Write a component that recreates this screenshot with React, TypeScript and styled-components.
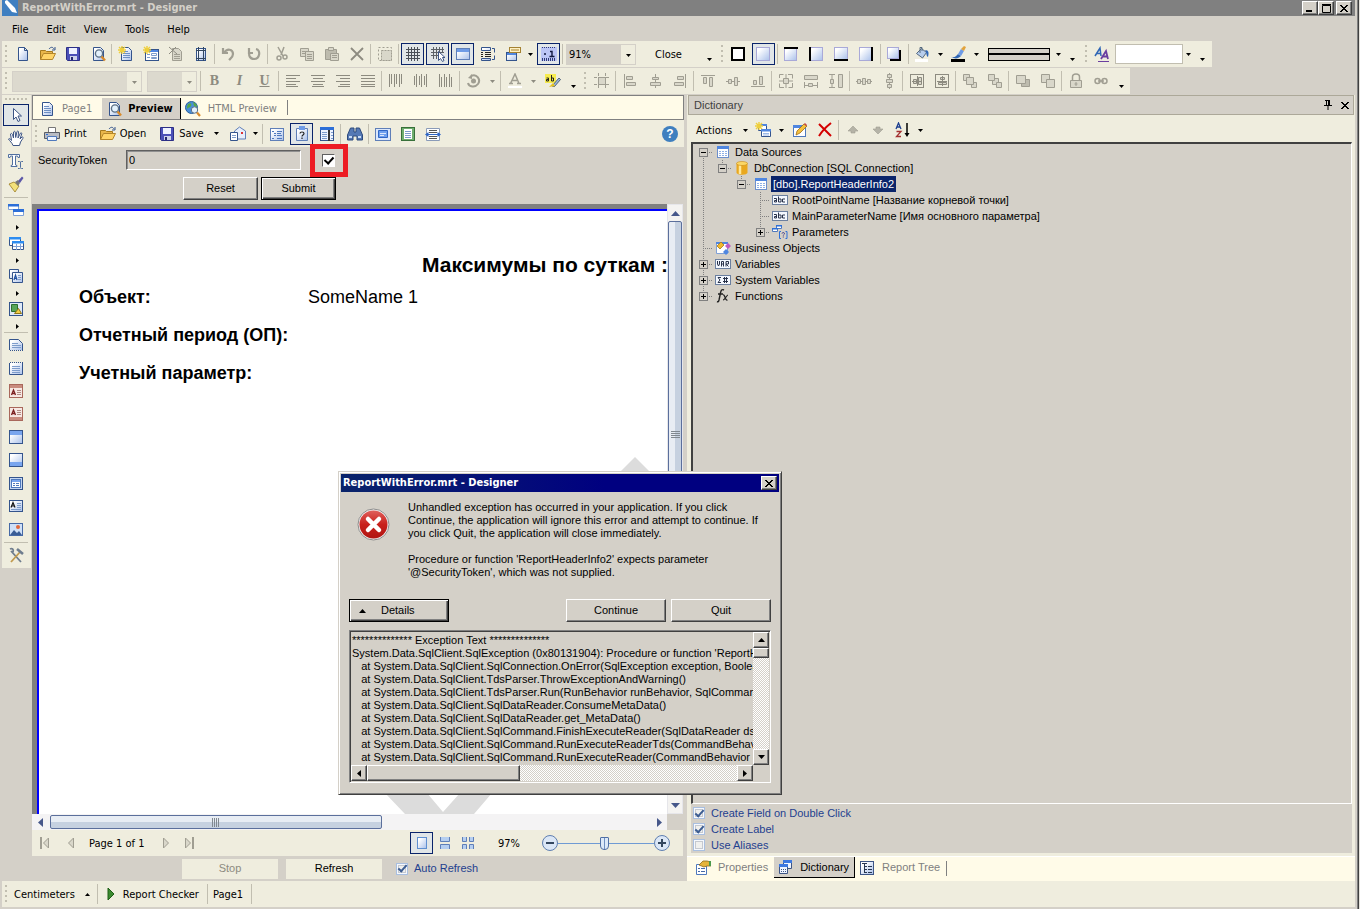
import React from "react";
import styled, { createGlobalStyle, css } from "styled-components";

const face = "#d4d0c8";
const bar = "#efedde";
const cream = "#fffbe8";
const navy = "#0a246a";
const ui = `"DejaVu Sans Condensed", "DejaVu Sans", sans-serif`;
const sans = `"Liberation Sans", Arial, sans-serif`;

const Global = createGlobalStyle`
  * { box-sizing: border-box; }
  html, body, #root { height: 100%; }
  body { margin: 0; background: ${face}; color: #000; font: 11px/13px ${sans}; overflow: hidden; }
  button, input, textarea, select { font: inherit; color: inherit; margin: 0; }
  button { border: 0; padding: 0; background: none; }
  svg { display: block; flex: none; }
`;

/* ---------- icons ---------- */

const B = "#34548c";
const G = "#a09e92";
const L = "#d9d7ca";

const page = <path d="M3.5 1.5h7l3 3v10h-10z" fill="url(#paper)" stroke={B} />;
const lines = <path d="M5 5.5h5M5 7.5h7M5 9.5h7M5 11.5h7" stroke="#6d8fc4" />;
const glass = (
  <>
    <circle cx="9" cy="7.5" r="3.6" fill="#e4f1fc" stroke="#5d7187" strokeWidth="1.4" />
    <path d="M11.5 10.5l3.5 4" stroke="#d98a2b" strokeWidth="2.4" />
  </>
);
const spark = <path d="M4 0v8M0 4h8M1 1l6 6M7 1L1 7" stroke="#efcf3a" strokeWidth="1.4" />;
const table = (
  <>
    <rect x="2.5" y="2.5" width="11" height="11" fill="#fff" stroke="#6d8fcb" />
    <path d="M2 2h12v3H2z" fill="#4f86e0" />
    <path d="M4 7.5h2M7 7.5h2M10 7.5h2M4 9.500h2M7 9.500h2M10 9.500h2M4 11.500h2M7 11.500h2M10 11.500h2" stroke="#8fb0e6" />
  </>
);
const redBand = (y: number, dy: number) => (
  <>
    <rect x="1.500" y="1.500" width="13" height="13" fill="#f7e9e4" stroke="#a9685c" />
    <rect x="2" y={y} width="12" height="3" fill="#c98c7f" />
    <path d={`M3.500 ${11 + dy}l2-5 2 5M4 ${9.5 + dy}h3`} fill="none" stroke="#7c1f1f" strokeWidth="1.300" />
    <path d={`M9 ${6.5 + dy}h4M9 ${8.5 + dy}h4M9 ${10.5 + dy}h4`} stroke="#b08a84" />
  </>
);
const box = (x: number, y: number, w: number, h: number) => (
  <rect x={x} y={y} width={w} height={h} fill="url(#paper)" stroke="#a9a9d8" />
);

const drawings: Record<string, React.ReactNode> = {
  logo: (
    <>
      <rect width="16" height="16" fill="#3f7fc1" />
      <path d="M3 1l2-1 8 8 2 5-5-1-7-9z" fill="#fff" />
    </>
  ),
  newDoc: <path d="M3.500 1.500h6l3 3v10h-9zM9.500 1.500v3h3" fill="url(#paper)" stroke={B} />,
  open: (
    <>
      <path d="M.500 13.500v-9h5l1 1h6v3" fill="#e8b64a" stroke="#a67a1e" />
      <path d="M.500 13.500l3-6h12l-3 6z" fill="#ffd468" stroke="#b3852a" />
      <path d="M9 3c2-2.500 4-2 5 0M15 1v3h-3" fill="none" stroke={B} />
    </>
  ),
  save: (
    <>
      <path d="M1.500 1.500h13v13h-12l-1-1z" fill="#4b50b8" stroke="#2c2f86" />
      <path d="M4 2h8v6H4z" fill="#eef2ff" />
      <path d="M5 10h7v4H5z" fill="#cdd2ea" />
      <path d="M6 11h2v3H6z" fill="#23266e" />
    </>
  ),
  preview: <>{page}{glass}</>,
  newPage: <>{page}{lines}{spark}</>,
  newForm: (
    <>
      <rect x="2.500" y="3.500" width="13" height="11" fill="#fff" stroke={B} />
      <path d="M3 4h12v2H3z" fill="#4f86e0" />
      <path d="M4 8.500h3M4 11.500h3M8.500 7.500h5v2h-5zM8.500 11.500h5v1h-5z" fill="none" stroke="#7d9ccb" />
      {spark}
    </>
  ),
  delPage: (
    <>
      <path d="M4.500 2.500h6l3 3v9h-9z" fill={L} stroke={G} />
      <path d="M6 8.500h6M6 10.500h6M6 12.500h6" stroke={G} />
      <path d="M1 1l8 7M8 1L1 8" stroke="#8d8b80" />
    </>
  ),
  pageSetup: (
    <>
      <rect x="3.500" y="2.500" width="9" height="12" fill="url(#paper)" stroke={B} />
      <path d="M5.500 1v14M10.500 1v14M3 4.500h10M3 12.500h10" stroke="#33475f" />
    </>
  ),
  undo: <path d="M2 2v5h5M3 7c3-5 9-4 9 1 0 3-2 4-4 6" fill="none" stroke={G} strokeWidth="2.200" />,
  redo: <path d="M3 2v5h4M10 3c5 1 4 10-2 10-4 0-6-4-4-7" fill="none" stroke={G} strokeWidth="2.200" />,
  cut: (
    <>
      <path d="M4 1l5 9M10 1L7 9" stroke={G} strokeWidth="1.500" />
      <circle cx="5" cy="12" r="2" fill="none" stroke={G} strokeWidth="1.500" />
      <circle cx="11" cy="11" r="2" fill="none" stroke={G} strokeWidth="1.500" />
    </>
  ),
  copy: <><path d="M1.500 2.500h8v8h-8z" fill={L} stroke={G} /><path d="M3 5.500h5M3 7.500h5" stroke={G} /><path d="M6.500 5.500h8v9h-8zM8 8.500h5M8 10.500h5M8 12.500h5" fill={L} stroke={G} /></>,
  paste: <><path d="M1.500 3.500h11v10h-11z" fill="#bdbbae" stroke={G} /><path d="M4.500 1.500h5v3h-5z" fill={L} stroke={G} /><path d="M6.500 7.500h8v7h-8zM8 9.500h5M8 11.500h5" fill={L} stroke={G} /></>,
  cross: <path d="M2 2l12 12M14 2L2 14" stroke="#8d8b80" strokeWidth="1.800" />,
  select: (
    <>
      <rect x="1.500" y="1.500" width="13" height="13" fill="none" stroke={G} strokeDasharray="2 2" />
      <rect x="4.500" y="4.500" width="10" height="10" fill={L} stroke={G} strokeDasharray="2 1" />
    </>
  ),
  grid: <path d="M3.500 1v14M6.500 1v14M9.500 1v14M12.500 1v14M1 3.500h14M1 6.500h14M1 9.500h14M1 12.500h14" stroke="#4a4f57" />,
  snap: (
    <>
      <path d="M3.500 1v12M6.500 1v12M9.500 1v12M12.500 1v6M1 3.500h13M1 6.500h13M1 9.500h8" stroke="#5c6167" />
      <path d="M8.500 5.500v9l2-2 2 3 1.500-1-1.500-3h2.500z" fill="#fff" stroke="#3d5585" />
    </>
  ),
  form: (
    <>
      <rect x="1.500" y="2.500" width="13" height="11" fill="url(#paper)" stroke="#5f7fb8" />
      <path d="M2 3h12v3H2z" fill="#6f9be6" />
    </>
  ),
  order: (
    <>
      <path d="M1.500 1.500h9v3h-9zM1.500 12.500h9v2h-9z" fill="url(#paper)" stroke={B} />
      <path d="M1 6.500h2M5 6.500h6M1 8.500h2M5 8.500h6M1 10.500h2M5 10.500h6" stroke="#222" />
      <path d="M12 2.500h2.500v4M12 13.500h2.500v-4" fill="none" stroke={B} />
    </>
  ),
  layers: (
    <>
      <rect x="1.500" y="6.500" width="10" height="8" fill="url(#paper)" stroke={B} />
      <path d="M2 7h9v2H2z" fill="#4f86e0" />
      <rect x="4.500" y="1.500" width="11" height="5" fill="#fff1c2" stroke="#a58232" />
      <path d="M6 4h8" stroke="#a58232" />
    </>
  ),
  ruler: (
    <>
      <path d="M0 1h16v14H0z" fill="#bcc6f6" />
      <path d="M1 13.500h14" stroke="#2f3a78" strokeDasharray="1 1" strokeWidth="3" />
      <path d="M1 1.500h14" stroke="#2f3a78" strokeDasharray="1 1" />
      <path d="M3 8h2M9 5.500h2V10M8.500 10.500h5" fill="none" stroke="#10183f" strokeWidth="1.400" />
    </>
  ),
  bAll: <rect x="2" y="2" width="12" height="12" fill="#fff" stroke="#000" strokeWidth="2" />,
  bNone: box(1.5, 1.5, 13, 13),
  bTop: <>{box(1.5, 2.5, 12, 12)}<path d="M1 2h14" stroke="#000" strokeWidth="2" /></>,
  bLeft: <>{box(2.5, 1.5, 12, 13)}<path d="M2 1v14" stroke="#000" strokeWidth="2" /></>,
  bBottom: <>{box(1.5, 1.5, 13, 12)}<path d="M1 14h14" stroke="#000" strokeWidth="2" /></>,
  bRight: <>{box(1.5, 1.5, 12, 13)}<path d="M14 1v14" stroke="#000" strokeWidth="2" /></>,
  bShadow: <><path d="M4 4h11v11H4z" fill="#000" />{box(1.5, 1.5, 11, 11)}</>,
  bucket: (
    <>
      <path d="M2.500 7.500l5-5 5 4-4 5.500z" fill="#b7cdec" stroke="#55697f" />
      <path d="M6 7V1.500h2V5" fill="none" stroke="#55697f" />
      <path d="M11 4c4 0 4 3 3 7-2-1-1-4-3-7z" fill="#2f66b5" />
      <path d="M1 13h13v3H1z" fill="#fff" />
    </>
  ),
  brush: (
    <>
      <path d="M1 11c4 1 5-1 7-3l3 2c-3 3-6 3-10 1z" fill="#2f66b5" />
      <path d="M8 8l3-5 3 2-3 5z" fill="#6f9be6" />
      <path d="M11 3l3-3 2 1-2 4z" fill="#e2a33c" />
      <path d="M1 13h14v3H1z" fill="#000" />
    </>
  ),
  aa: (
    <>
      <path d="M1 10l5-8 1 8M3 7.500h4" fill="none" stroke="#2f66b5" strokeWidth="1.500" />
      <path d="M7 13l5-8 2 8M9 10.500h4" fill="none" stroke="#6b3fa0" strokeWidth="1.800" />
      <path d="M4 15.500h11" stroke="#6b3fa0" />
    </>
  ),
  alignL: <path d="M1 2.500h14M1 5.500h10M1 8.500h14M1 11.500h10M1 13.500h12" stroke="#8d8b80" />,
  alignC: <path d="M1 2.500h14M3 5.500h10M1 8.500h14M3 11.500h10M2 13.500h12" stroke="#8d8b80" />,
  alignR: <path d="M1 2.500h14M5 5.500h10M1 8.500h14M5 11.500h10M3 13.500h12" stroke="#8d8b80" />,
  alignJ: <path d="M1 2.500h14M1 5.500h14M1 8.500h14M1 11.500h14M1 13.500h14" stroke="#8d8b80" />,
  vTop: <path d="M1.500 1v13M3.500 1v10M6.500 1v13M8.500 1v10M11.500 1v13M13.500 1v10" stroke="#8d8b80" />,
  vMid: <path d="M1.500 3v9M3.500 1v13M6.500 3v9M8.500 1v13M11.500 3v9M13.500 1v13" stroke="#8d8b80" />,
  vBot: <path d="M1.500 1v13M3.500 4v10M6.500 1v13M8.500 4v10M11.500 1v13M13.500 4v10" stroke="#8d8b80" />,
  rotate: (
    <>
      <path d="M5 3c6-3 10 4 7 8-3 4-9 3-10-1" fill="none" stroke={G} strokeWidth="2" />
      <circle cx="7.500" cy="8" r="2.500" fill={G} />
      <path d="M2 5l4-4v5z" fill={G} />
    </>
  ),
  fontColor: (
    <>
      <path d="M3.500 10.500L8 1l4 9.500M5 7.500h5M2 10.500h4M10 10.500h4" fill="none" stroke={G} strokeWidth="1.500" />
      <path d="M1 13h14v2H1z" fill="#fff" />
    </>
  ),
  highlight: (
    <>
      <path d="M0 1h11v9H0z" fill="#f7ec4f" />
      <path d="M1.500 5h2v3h-2v-1.500h2M6.500 2v6h2V5h-2" fill="none" stroke="#222" />
      <path d="M7 13l7-8 1.500 1.500-6 7z" fill="#9db8dd" stroke="#33475f" strokeWidth=".8" />
      <path d="M4 14l4-4 2 3z" fill="#e3c21f" />
    </>
  ),
  toGrid: (
    <>
      <path d="M4.500 0v16M11.500 0v16M0 4.500h16M0 11.500h16" stroke={G} strokeDasharray="3 1" />
      <rect x="4.500" y="4.500" width="7" height="7" fill={L} stroke={G} />
    </>
  ),
  objL: <path d="M2.500 1v14M4.500 3.500h6v3h-6zM4.500 9.500h9v3h-9z" fill={L} stroke={G} />,
  objC: <><path d="M8.500 1v14" stroke={G} /><path d="M5.500 4.500h6v2h-6zM3.500 9.500h10v3h-10z" fill={L} stroke={G} /></>,
  objR: <path d="M13.500 1v14M5.500 3.500h6v3h-6zM2.500 9.500h9v3h-9z" fill={L} stroke={G} />,
  objT: <path d="M1 2.500h14M3.500 4.500h3v6h-3zM9.500 4.500h3v9h-3z" fill={L} stroke={G} />,
  objM: <><path d="M1 8.500h14" stroke={G} /><path d="M3.500 6.500h3v4h-3zM9.500 4.500h3v8h-3z" fill={L} stroke={G} /></>,
  objB: <path d="M1 13.500h14M3.500 7.500h3v4h-3zM9.500 3.500h3v8h-3z" fill={L} stroke={G} />,
  size1: (
    <>
      <path d="M1.500 5v-3.500h4M10 1.500h4.500v4M14.500 10v4.500h-4M6 14.500H1.500v-4" fill="none" stroke={G} />
      <path d="M5.500 5.500h5v5h-5zM8 1v4M8 11v4M1 8h4M11 8h4" fill={L} stroke={G} />
    </>
  ),
  size2: <path d="M1.500 2.500h13v4h-13zM5.500 10.500h4v3h-4zM1.500 9v6M14.500 9v6M1 12.500h4M10 12.500h4" fill={L} stroke={G} />,
  size3: <path d="M10.500 1.500h4v13h-4zM2.500 6.500h3v4h-3zM1 1.500h6M1 14.500h6M4 2v4M4 11v3" fill={L} stroke={G} />,
  spaceH: <><path d="M0 8.500h16" stroke={G} /><path d="M1.500 6.500h3v4h-3zM6.500 5.500h3v6h-3zM11.500 6.500h3v4h-3z" fill={L} stroke={G} /></>,
  spaceV: <><path d="M8.500 0v16" stroke={G} /><path d="M6.500 1.500h4v3h-4zM5.500 6.500h6v3h-6zM6.500 11.500h4v3h-4z" fill={L} stroke={G} /></>,
  centerH: <><rect x="1.500" y="1.500" width="13" height="13" stroke="#8d8b80" /><path d="M4.500 6.500h3v4h-3zM9.500 4.500h3v7h-3zM3 8.500h10M8.500 3v10" fill={L} stroke="#8d8b80" /></>,
  centerV: <><rect x="1.500" y="1.500" width="13" height="13" stroke="#8d8b80" /><path d="M6.500 4.500h4v2h-4zM4.500 9.500h8v2h-8zM3 8.500h10M8.500 3v10" fill={L} stroke="#8d8b80" /></>,
  front: <><path d="M1.500 1.500h6v6h-6zM9.500 9.500h5v5h-5z" fill={L} stroke={G} /><path d="M4.500 4.500h7v7h-7z" fill={L} stroke={G} /></>,
  back: <><path d="M5.500 5.500h6v6h-6z" fill={L} stroke={G} /><path d="M1.500 1.500h6v6h-6zM9.500 9.500h5v5h-5z" fill={L} stroke={G} /></>,
  forward: <><path d="M6.500 6.500h8v7h-8z" fill="#bdbbae" stroke={G} /><path d="M1.500 2.500h9v8h-9z" fill={L} stroke={G} /></>,
  backward: <><path d="M1.500 1.500h8v8h-8z" fill={L} stroke={G} /><path d="M6.500 6.500h8v8h-8z" fill={L} stroke={G} /></>,
  lock: (
    <>
      <path d="M4.500 7V4c0-4 7-4 7 0v3" fill="none" stroke={G} strokeWidth="1.500" />
      <path d="M2.500 7.500h11v7h-11zM8 9v4M6.500 11h3" fill={L} stroke={G} />
    </>
  ),
  link: (
    <>
      <circle cx="4.500" cy="8" r="2.500" fill="none" stroke={G} strokeWidth="1.500" />
      <circle cx="11.500" cy="8" r="2.500" fill="none" stroke={G} strokeWidth="1.500" />
      <path d="M5 8h6" stroke={G} strokeWidth="1.500" />
    </>
  ),
  pointer: <path d="M5.500 1.500v11l2.500-2.500 2 4.500 2-1-2-4.500h3.500z" fill="#fff" stroke="#3d5585" />,
  hand: (
    <path
      d="M5 15.500c-1-3-3-4-4.500-6.500 1-1 2 0 3 1.500L2.500 4c1-1 1.500-.5 2 .5L5.500 8 5.500 2c.8-1 1.500-.8 1.700 0l.5 5.500L9 1.500c.8-.8 1.500-.5 1.500.5l-.5 6 2.500-5c1-.5 1.500 0 1.200 1L12 9l2-2c1-.3 1.500.5.8 1.500L12.500 12 11.500 15.500z"
      fill="#fff"
      stroke="#3d5585"
    />
  ),
  text: (
    <>
      <path d="M.500 1.500h11v3h-1.500l-.5-1.500H7.500v9l1.500.5v1H3v-1l1.500-.5V3H2.500L2 4.500H.500z" fill="#fff" stroke="#52709f" />
      <path d="M10 8.500h1.500l1 .5 1-.5H15M12.500 9v5.500M10 15.500h1.500l1-.5 1 .5H15" fill="none" stroke="#52709f" />
    </>
  ),
  painter: (
    <>
      <path d="M1 8l5-2 5 4-4 6C5 13 3 11 1 8z" fill="#f3e17a" stroke="#9a7b23" strokeWidth=".8" />
      <path d="M7 6l3-2 2 3-2 3z" fill="#777" />
      <path d="M10 5l4-4.500 1.500 1.500L12 7z" fill="#5c57a8" />
    </>
  ),
  bands: (
    <>
      <path d="M.500 2.500h10v5H.500z" fill="#fff" stroke="#7fa0d6" />
      <path d="M5.500 8.500h10v5h-10z" fill="#fff" stroke="#7fa0d6" />
      <path d="M0 2h11v2.500H0zM5 7h11v3H5z" fill="#2d6fd8" />
    </>
  ),
  crossTab: (
    <>
      <path d="M1.500 2.500h11v8h-11z" fill="#fff" stroke={B} />
      <path d="M4.500 6.500h11v8h-11z" fill="#fff" stroke={B} />
      <path d="M1 2h12v2.500H1zM4 6h12v2.500H4z" fill="#2d8cf0" />
      <path d="M5 11.500h10M8.500 9v6M12.500 9v6" stroke="#7fa0d6" />
    </>
  ),
  components: (
    <>
      <path d="M1.500 1.500h9v9h-9z" fill="url(#paper)" stroke={B} />
      <path d="M4.500 4.500h10v10h-10z" fill="url(#paper)" stroke={B} />
      <path d="M6 12l1.500-5L9 12M6.500 10.500h2" fill="none" stroke="#1d4da0" strokeWidth="1.200" />
      <path d="M10 7.500h3M10 9.500h3M10 11.500h3" stroke="#7d9ccb" />
    </>
  ),
  shapes: (
    <>
      <rect x="1.500" y="1.500" width="13" height="13" fill="#dfeaf8" stroke={B} />
      <path d="M3.500 3.500h6v7h-6z" fill="#58a558" stroke="#2b6f2f" />
      <path d="M6.500 12.500l4-5 3 5z" fill="#f2cf45" stroke="#8e7419" />
    </>
  ),
  bandTitle: <><path d="M2 13V2.500h8l4 4V13z" fill="url(#paper)" /><path d="M1.500 13V2.500h9l4 4V13" stroke={B} /><path d="M4 6.500h6M4 8.500h9M4 10.500h9" stroke="#7d9ccb" /><path d="M2 13.500h13" stroke={B} strokeDasharray="1 1" /></>,
  bandSummary: <><path d="M1.500 3v11.500h13V3" fill="url(#paper)" stroke={B} /><path d="M4 6.500h8M4 8.500h8M4 10.500h8M4 12.500h8" stroke="#7d9ccb" /><path d="M2 2.500h13" stroke={B} strokeDasharray="1 1" /></>,
  pageHeader: redBand(2, 1),
  pageFooter: redBand(11, -2),
  groupHeader: <><rect x="1.500" y="1.500" width="13" height="13" fill="url(#paper)" stroke={B} /><path d="M2 2h12v4H2z" fill="#79a5ee" /></>,
  groupFooter: <><rect x="1.500" y="1.500" width="13" height="13" fill="url(#paper)" stroke={B} /><path d="M2 10h12v4H2z" fill="#79a5ee" /></>,
  dataBand: <><rect x="1.500" y="2.500" width="13" height="12" fill="#c4d6f2" stroke={B} /><rect x="3.500" y="4.500" width="9" height="8" fill="#fff" stroke="#4f79bd" /><path d="M4 5h8v2H4z" fill="#79a5ee" /><path d="M5 8.500h2M8 8.500h3M5 10.500h2M8 10.500h3" stroke="#4f79bd" /></>,
  textBox: <><rect x="1.500" y="2.500" width="13" height="11" fill="url(#paper)" stroke={B} /><path d="M3 9.500l2-5 2 5M4 8h2.500" fill="none" stroke="#111" strokeWidth="1.200" /><path d="M9 5.500h4M9 7.500h4M9 9.500h4M3 11.500h10" stroke="#7d9ccb" /></>,
  image: <><rect x="1.500" y="2.500" width="13" height="12" fill="#cfe0f7" stroke="#4669a6" /><path d="M2 14l4-5 3 3 2-2 3 4z" fill="#395c96" /><circle cx="10" cy="6" r="2" fill="#e2683a" /></>,
  toolbox: <><path d="M3 4l10 11M2 2c2-1 4 0 3 3" fill="none" stroke="#6f7d8e" strokeWidth="1.800" /><path d="M12 5L3 15" stroke="#c19a4d" strokeWidth="1.800" /><path d="M9 2l6 5" stroke="#6f7d8e" strokeWidth="2.600" /></>,
  pageLines: <>{page}{lines}</>,
  html: (
    <>
      <circle cx="6.500" cy="6.500" r="6" fill="#4a8fd8" stroke="#2b5f9c" />
      <path d="M3 3c3-2 4 0 3 2s-3 1-4 3c0-2 0-3 1-5zM8 1c3 1 4 3 4 5l-3-1z" fill="#58a94a" />
      <circle cx="9.500" cy="9" r="3.200" fill="#e4f1fc" stroke="#5d7187" />
      <path d="M12 11.500l3 3.500" stroke="#d98a2b" strokeWidth="2.200" />
    </>
  ),
  print: (
    <>
      <path d="M4.500 1.500h7v5h-7z" fill="#fff" stroke="#777" />
      <path d="M.500 6.500h15v6H.500z" fill="#b9bcc4" stroke="#5a5d66" />
      <path d="M3.500 10.500h9v4h-9z" fill="#eef4ff" stroke="#4f79bd" />
      <path d="M2 8.500h2" stroke="#2d6fd8" />
    </>
  ),
  mail: (
    <>
      <path d="M4.500 5l5-4 6 4v8h-11z" fill="#e7eefa" stroke="#5f7fb8" />
      <path d="M.500 6.500h7v8h-7z" fill="#fff" stroke={B} />
      <path d="M2 9.500h4M2 11.500h4" stroke="#7d9ccb" />
      <path d="M11 6h2v2h-2z" fill="#d33" />
    </>
  ),
  bookmarks: <><rect x="1.500" y="2.500" width="13" height="12" fill="url(#paper)" stroke="#5f7fb8" /><path d="M3 5.500h2M5 7.500h2M5 9.500h2M3 12.500h2M8 5.500h5M8 7.500h4M8 9.500h5M8 12.500h5" stroke="#4f79bd" /></>,
  params: <><path d="M2.500 2.500h11v12h-11z" fill="url(#paper)" stroke="#5f7fb8" /><path d="M5 0h6v4H5z" fill="#6f9be6" /><path d="M6 7.500c0-2 4-2 4 0 0 1.500-2 1.500-2 3M8 11.500v1.500" fill="none" stroke="#222" strokeWidth="1.200" /></>,
  thumbs: <><rect x="1.500" y="1.500" width="13" height="13" fill="#eef4ff" stroke={B} /><path d="M1 1h14v3H1z" fill="#2d6fd8" /><path d="M9 4h2v11H9z" fill="#333" /><path d="M3 6.500h5M3 8.500h5M3 10.500h5M3 12.500h5M12 6.500h2M12 9.500h2M12 12.500h2" stroke="#7d9ccb" /></>,
  find: <><path d="M.500 9l3-7H7v4h2V2h3.500l3 7v5H10v-4H6v4H.500z" fill="#5579b5" stroke="#2d4a7d" /><path d="M2 11h3M11 11h3" stroke="#c9dcf5" strokeWidth="2" /></>,
  fullScreen: <><rect x=".500" y="2.500" width="15" height="12" fill="#dce8fb" stroke="#5f7fb8" /><path d="M3.500 4.500h9v7h-9z" fill="#6fa0ee" stroke="#2f66c5" /><path d="M5 7.500h6M5 9.500h4" stroke="#dce8fb" /></>,
  onePage: <><rect x="1.500" y="1.500" width="13" height="13" fill="#6fae6f" stroke="#38703a" /><path d="M4 3h8v10H4z" fill="#fff" /><path d="M5 5.500h6M5 7.500h6M5 9.500h6M5 11.500h6" stroke="#7d9ccb" /></>,
  pageWidth: <><path d="M1.500 2.500h13v12h-13z" fill="#fff" stroke="#8a9bb8" /><path d="M4 4.500h8M4 6.500h8M4 10.500h8M4 12.500h8" stroke="#555" /><path d="M0 8.500L3.500 6v5zM16 8.500L12.500 6v5z" fill="#2f66c5" /><path d="M3 8.500h10" stroke="#2f66c5" /></>,
  newItem: <><path d="M3.500 2.500h8v6h-8z" fill="#fff" stroke={B} /><path d="M3 2h9v2H3z" fill="#4f86e0" /><path d="M6.500 7.500h9v7h-9z" fill="#fff" stroke={B} /><path d="M6 7h10v2.500H6z" fill="#4f86e0" /><path d="M8 11.500h6M8 13h6" stroke="#9bb8e6" />{spark}</>,
  edit: <><rect x="1.500" y="3.500" width="12" height="11" fill="#fff" stroke="#4f79bd" /><path d="M1 3h13v3H1z" fill="#4f86e0" /><path d="M4 13l1-4 7-7 3 2-7 7z" fill="#f5c13d" stroke="#9c6b16" strokeWidth=".8" /><path d="M12 2l1-1 2 2-1 1z" fill="#c44" /></>,
  remove: <path d="M2 2l12 12M14 1C9 5 5 9 2 14" fill="none" stroke="#d40000" strokeWidth="2" />,
  up: <path d="M8 4l5 5H10v2H6V9H3z" fill="#b5b3a7" stroke={G} strokeWidth=".6" />,
  down: <path d="M8 12l5-5H10V5H6v2H3z" fill="#b5b3a7" stroke={G} strokeWidth=".6" />,
  sort: (
    <>
      <path d="M1 7l2.500-6L6 7M2 5h3" fill="none" stroke="#1d3f8f" strokeWidth="1.300" />
      <path d="M1.500 9.500H6L1.500 14.500H6" fill="none" stroke="#a33030" strokeWidth="1.300" />
      <path d="M12 1v11" stroke="#000" strokeWidth="1.500" />
      <path d="M9.500 11h5L12 15z" fill="#000" />
    </>
  ),
  table,
  db: <><path d="M2.500 3.500v9c0 3 11 3 11 0v-9z" fill="#e9a81f" /><path d="M6 4v10" stroke="#ffe79a" strokeWidth="2.500" /><ellipse cx="8" cy="3.500" rx="5.500" ry="2" fill="#fbd766" stroke="#c98a15" strokeWidth=".6" /></>,
  abc: (
    <>
      <rect x=".500" y="3.500" width="15" height="9" fill="#f4f8ff" stroke="#6b7f9f" />
      <path d="M2 6.500h2.500V10H2.500V8.500H4M6.500 4.500V10H9V7H6.500M13 7h-2.500v3H13" fill="none" stroke="#28324a" />
    </>
  ),
  parameters: (
    <>
      <path d="M4.500 1.500h5v3h-5zM.500 4.500h5v3H.500z" fill="#fff" stroke="#4f79bd" />
      <path d="M4 1h6v1.500H4zM0 4h6v1.500H0z" fill="#2d6fd8" />
      <path d="M9 7.500H7.500v7H9M13.500 7.500H15v7h-1.500" fill="none" stroke="#2d6fd8" />
      <path d="M10 9.500c0-1.200 2.500-1.200 2.500 0s-1.200 1-1.200 2M11.300 12.500v1" fill="none" stroke="#403a8a" />
    </>
  ),
  business: (
    <>
      <path d="M1.500 2.500h11v11h-11z" fill="#fff" stroke="#7fa0d6" />
      <path d="M1 2h12v2H1z" fill="#4f86e0" />
      <path d="M2 6l4-4 3 3-4 4z" fill="#f2b92d" stroke="#a67a1e" strokeWidth=".8" />
      <path d="M10 6l3-3 3 3-3 3z" fill="#c05bc0" />
      <path d="M8 12l3-3 3 3-3 3z" fill="#4f86e0" />
    </>
  ),
  variable: (
    <>
      <rect x=".500" y="3.500" width="15" height="9" fill="#f4f8ff" stroke="#6b7f9f" />
      <path d="M2.500 5v3l1 2 1-2V5M6.500 10.500V5.500h2v5M6.500 8h2M11 10.500V5.500h2.500V8H11l2.500 2.500" fill="none" stroke="#28324a" />
    </>
  ),
  sysVar: (
    <>
      <rect x=".500" y="3.500" width="15" height="9" fill="#f4f8ff" stroke="#6b7f9f" />
      <path d="M6 5.500H3L5 8l-2 2.500h3M9.500 5v6M11.500 5v6M8 6.500h5M8 9.500h5" fill="none" stroke="#28324a" />
    </>
  ),
  fx: (
    <>
      <path d="M9 2c-2-1-3 0-3.500 3L4 12c-.5 2-1 2-2 1.500M3 6h5" fill="none" stroke="#222" strokeWidth="1.400" />
      <path d="M8 7c2-1 2 6 4.500 5M13 7c-1.500 0-3 5-5 5" fill="none" stroke="#222" strokeWidth="1.200" />
    </>
  ),
  properties: (
    <>
      <path d="M1.500 4.500h10v10h-10z" fill="#fff" stroke="#4f79bd" />
      <path d="M3 8.500h2M6 8.500h4M3 11.500h2M6 11.500h4" stroke="#4669a6" />
      <path d="M4 5l4-4h4l4 1v4h-4L9 7z" fill="#e5b43a" stroke="#8e6a19" strokeWidth=".8" />
      <path d="M14 1h2v5h-2z" fill="#4c9a4c" />
    </>
  ),
  dictionary: (
    <>
      <path d="M6.500 1.500h8v8h-8z" fill="#eef4ff" stroke="#3d5585" />
      <path d="M6 1h9v3H6z" fill="#3d78e0" />
      <path d="M2.500 5.500h8v9h-8z" fill="#eef4ff" stroke="#3d5585" />
      <path d="M2 5h9v3H2z" fill="#3d78e0" />
      <path d="M4 10.500h1M6 10.500h1M8 10.500h1M4 12.500h1M6 12.500h1M8 12.500h1" stroke="#3d5585" />
    </>
  ),
  tree: <><rect x="1.500" y="1.500" width="13" height="13" fill="url(#paper)" stroke="#3d5585" /><path d="M3 3.500h5M5.500 4v9M6 6.500h2M6 9.500h2M6 12.500h2M9 6.500h4M9 9.500h4M9 12.500h4" stroke="#27364f" /></>,
  first: <><path d="M3 2h2v12H3z" fill={G} /><path d="M11.500 3v10L6.500 8z" fill={L} stroke={G} /></>,
  prev: <path d="M10.500 3v10L5.500 8z" fill={L} stroke={G} />,
  next: <path d="M5.500 3v10l5-5z" fill={L} stroke={G} />,
  last: <><path d="M11 2h2v12h-2z" fill={G} /><path d="M4.500 3v10l5-5z" fill={L} stroke={G} /></>,
  single: <rect x="3.500" y="2.500" width="9" height="11" fill="url(#paper)" stroke="#5f8fd0" />,
  rows: <path d="M3.500 2v4.500h9V2M3.500 14V9.500h9V14" fill="#b5cef0" stroke="#5f7fb8" />,
  multi: <path d="M2.500 2v4.500h4V2M9.500 2v4.500h4V2M2.500 14V9.500h4V14M9.500 14V9.500h4V14" fill="#b5cef0" stroke="#5f7fb8" />,
  play: <path d="M5 2l6 6-6 6z" fill="#3b8a2f" stroke="#1e5e17" />,
};

const Icon = ({ name }: { name: string }) => (
  <svg width="16" height="16" viewBox="0 0 16 16" fill="none" aria-hidden="true">
    {drawings[name]}
  </svg>
);

/* ---------- shared parts ---------- */

const Screen = styled.div`display: flex; height: 100vh; min-height: 640px;`;
const Window = styled.div`
  flex: 1; min-width: 0; display: flex; flex-direction: column; padding: 0 2px 2px; background: ${face};
`;
const Edge = styled.div`
  width: 3px; background: #e4e2dc; border-left: 1px solid #808080; box-shadow: inset 1px 0 #404040;
`;

const raised = css`
  background: ${face};
  border: 1px solid; border-color: #fff #404040 #404040 #fff;
  box-shadow: inset -1px -1px #808080;
`;

const TitleBar = styled.header`
  display: flex; align-items: center; height: 16px; flex: none; background: #808080; color: ${face};
  font: bold 11px/16px ${ui}; padding-right: 3px; gap: 4px;
`;
const TitleText = styled.h1`flex: 1; margin: 0; font: inherit;`;
const CaptionButtons = styled.div`display: flex;`;
const CaptionButton = styled.button<{ $gap?: boolean }>`
  ${raised}
  width: 16px; height: 14px; display: flex; align-items: center; justify-content: center; color: #000;
  margin-left: ${p => (p.$gap ? 2 : 0)}px;
`;

const MenuBar = styled.nav`
  display: flex; align-items: center; height: 25px; flex: none; font: 11px/13px ${ui}; padding: 2px 0 0 10px; gap: 18px;
`;
const MenuItem = styled.button``;

const ToolbarRow = styled.div`display: flex; flex: none; height: 26px; margin-bottom: 1px; overflow: hidden;`;
const Toolbar = styled.div<{ $height?: number; $top?: number }>`
  display: flex; align-items: center; flex: none; min-width: 0;
  height: ${p => p.$height ?? 26}px; padding-top: ${p => p.$top ?? 0}px; background: ${bar}; font: 11px/13px ${ui};
`;
const Grip = styled.span`
  width: 2px; height: 18px; margin: 0 3px; flex: none;
  background: repeating-linear-gradient(#c1beb0 0 2px, transparent 2px 5px);
`;
const Sep = styled.span`width: 1px; height: 20px; margin: 0 1px; flex: none; background: #c1beb0;`;
const Tool = styled.button<{ $on?: boolean }>`
  width: 23px; height: 22px; margin: 0 1px; flex: none; display: flex; align-items: center; justify-content: center;
  ${p => p.$on && css`background: #e1e6e8; border: 1px solid ${navy};`}
`;
const TextTool = styled.button<{ $pad?: number }>`
  display: flex; align-items: center; gap: 4px; height: 22px; flex: none; padding: 0 ${p => p.$pad ?? 5}px;
`;
const Arrow = styled.button<{ $w?: number; $low?: boolean; $dim?: boolean }>`
  width: ${p => p.$w ?? 11}px; height: 22px; flex: none; display: flex; justify-content: center;
  align-items: ${p => (p.$low ? "flex-end" : "center")};
  padding-bottom: ${p => (p.$low ? 3 : 0)}px;
  color: ${p => (p.$dim ? "#8d8b80" : "#000")};
`;
const Caret = ({ dir = "down" }: { dir?: string }) => (
  <svg width="5" height="5" viewBox="0 0 5 5" aria-hidden="true">
    <path d={dir === "up" ? "M0 4h5L2.500 1z" : dir === "right" ? "M1 0v5l3-2.500z" : "M0 1h5L2.500 4z"} fill="currentColor" />
  </svg>
);
const DropArrow = (p: { w?: number; low?: boolean; dim?: boolean; label?: string }) => (
  <Arrow $w={p.w} $low={p.low} $dim={p.dim} aria-label={p.label ?? "More"}><Caret /></Arrow>
);
const Tools = ({ names }: { names: string[] }) => (
  <>{names.map(n => <Tool key={n} aria-label={n}><Icon name={n} /></Tool>)}</>
);

const Combo = styled.div<{ $w: number }>`
  width: ${p => p.$w}px; height: 21px; flex: none; display: flex; background: ${bar}; border: 1px solid ${face};
`;
const ComboSelect = styled.select`
  appearance: none; flex: 1; min-width: 0; border: 0; border-radius: 0; background: ${face}; padding: 0 2px; font: 11px/13px ${ui};
`;
const FontGlyph = styled.span<{ $kind: string }>`
  font: bold 14px/16px "Liberation Serif", serif; color: #8d8b80;
  font-style: ${p => (p.$kind === "I" ? "italic" : "normal")};
  text-decoration: ${p => (p.$kind === "U" ? "underline" : "none")};
`;
const LineSample = styled.button`
  width: 62px; height: 13px; margin: 0 3px 0 6px; border: 1px solid #000; background: ${face};
  display: flex; align-items: center;
  &::before { content: ""; flex: 1; height: 2px; background: #000; }
`;
const StyleBox = styled.div`width: 68px; height: 20px; border: 1px solid #c1beb0; background: #fff; flex: none;`;
const Space = styled.span<{ $w?: number }>`width: ${p => p.$w}px; flex: ${p => (p.$w ? "none" : "1")};`;

/* ---------- body ---------- */

const Body = styled.div`flex: 1; min-height: 0; display: flex; align-items: stretch;`;

const Toolbox = styled.aside`
  width: 29px; margin-right: 1px; flex: none; align-self: flex-start; background: ${bar};
  display: flex; flex-direction: column; align-items: center; padding: 3px 1px 1px 0;
`;
const TopGrip = styled.span`
  width: 22px; height: 2px; margin-bottom: 4px;
  background: repeating-linear-gradient(90deg, #c1beb0 0 2px, transparent 2px 4px);
`;
const BoxTool = styled.button<{ $on?: boolean }>`
  width: 26px; height: 22px; margin-bottom: 1px; display: flex; align-items: center; justify-content: center;
  ${p => p.$on && css`background: #e1e6e8; border: 1px solid ${navy};`}
`;
const BoxArrow = styled.button`height: 10px; width: 26px; display: flex; justify-content: center; align-items: center; padding-left: 2px;`;
const BoxSep = styled.span`width: 24px; height: 1px; margin: 1px 0; background: #c1beb0;`;

const DocPanel = styled.main`flex: 652 1 0; min-width: 0; display: flex; flex-direction: column;`;
const DocTabs = styled.div`
  height: 25px; flex: none; display: flex; background: ${cream}; border: 1px solid #808080; font: 11px/13px ${ui};
`;
const DocTab = styled.button<{ $on?: boolean }>`
  display: flex; align-items: center; gap: 7px; padding: 2px 10px 0 6px; color: #808080;
  & + & { padding-left: 4px; }
  && {
    ${p => p.$on && css`background: ${face}; color: #000; font-weight: bold; border-right: 1px solid #000; padding: 0 7px 0 4px; gap: 6px; margin-top: 2px;`}
  }
`;
const TabEnd = styled.span`width: 1px; height: 15px; margin-top: 4px; background: #808080;`;
const Help = styled.button`
  width: 16px; height: 16px; border-radius: 8px; background: #3f7fbf; color: #fff; font: bold 12px/16px ${sans}; margin-right: 6px;
`;

const ParamForm = styled.form`
  height: 57px; flex: none; padding: 3px 6px; display: flex; flex-direction: column; gap: 7px;
`;
const ParamRow = styled.div`display: flex; align-items: center; height: 20px;`;
const ParamLabel = styled.label`width: 88px;`;
const ParamInput = styled.input`
  width: 175px; height: 20px; background: ${face}; padding: 0 2px; border-radius: 0; outline: 0;
  border: 1px solid; border-color: #606060 #fff #fff #606060; box-shadow: inset 1px 1px #909090;
`;
const Highlight = styled.span`
  position: relative; margin-left: 21px; display: flex;
  &::after { content: ""; position: absolute; inset: -10px -13px -10px -12px; border: 5px solid #ed1c24; pointer-events: none; }
`;
const Check = styled.input<{ $soft?: boolean }>`
  appearance: none; width: 13px; height: 13px; flex: none; display: grid; place-items: center;
  border: 1px solid; border-color: #606060 #fff #fff #606060; background: #fff;
  ${p => p.$soft && css`width: 12px; height: 12px; border-color: #a9bfe0; background: #f0f0ee; box-shadow: inset 0 0 0 1px #f5f8fd, inset 0 0 0 2px #c5c9d0;`}
  &:checked::before {
    content: ""; width: ${p => (p.$soft ? 3 : 4)}px; height: 7px; margin-top: -2px; transform: rotate(42deg);
    border: solid ${p => (p.$soft ? "#3b5c92" : "#000")}; border-width: 0 2px 2px 0;
  }
`;
const ButtonRow = styled.div`display: flex; gap: 3px; padding-left: 145px;`;
const Push = styled.button<{ $w: number; $default?: boolean }>`
  ${raised}
  width: ${p => p.$w}px; height: 23px; display: flex; align-items: center; justify-content: center; flex: none;
  ${p => p.$default && css`border-color: #000; box-shadow: inset 1px 1px #fff, inset -1px -1px #404040, inset -2px -2px #808080;`}
`;

const Viewer = styled.section`
  flex: 1; min-height: 0; display: grid; grid-template: minmax(0, 1fr) 16px / minmax(0, 1fr) 16px; margin-right: 1px;
`;
const Canvas = styled.div`background: #808080; padding: 5px 0 0 5px; overflow: hidden; display: flex;`;
const Sheet = styled.article`
  position: relative; flex: 1; background: #fff; border: solid #00f; border-width: 2px 0 0 2px; overflow: hidden;
  padding: 42px 0 0 40px; white-space: nowrap; color: #000;
`;
const Heading = styled.h2`margin: 0 0 9px 343px; font: bold 21px/24px ${sans};`;
const Facts = styled.dl`margin: 0; display: grid; grid-template-columns: 229px 1fr; row-gap: 16px; font: 18px/22px ${sans};`;
const FactName = styled.dt`font-weight: bold;`;
const FactValue = styled.dd`margin: 0;`;
const Watermark = styled.svg`position: absolute; left: 0; top: 0;`;

const VBar = styled.div`
  display: flex; flex-direction: column; align-items: center; background: #f4f3f1; border: 1px solid #e6e6ea; color: #46578a;
`;
const HBar = styled.div`display: flex; align-items: center; background: #f4f3f4; color: #46578a;`;
const BarEnd = styled.button`width: 16px; height: 16px; flex: none; display: flex; align-items: center; justify-content: center;`;
const VThumb = styled.div`
  width: 14px; flex: 0 1 428px; border: 1px solid #5b6f9c; border-radius: 2px;
  background: linear-gradient(90deg, #e8edf4 0 50%, #c6d1e0 50%);
  display: flex; align-items: center; justify-content: center;
  &::before { content: ""; width: 9px; height: 8px; background: repeating-linear-gradient(#808890 0 1px, transparent 1px 2px); }
`;
const HThumb = styled.div`
  width: 332px; height: 14px; border: 1px solid #5b6f9c; border-radius: 2px; margin-left: 2px;
  background: linear-gradient(#e8edf4 0 50%, #c6d1e0 50%);
  display: flex; align-items: center; justify-content: center;
  &::before { content: ""; width: 8px; height: 9px; background: repeating-linear-gradient(90deg, #808890 0 1px, transparent 1px 2px); }
`;
const BigCaret = ({ dir }: { dir: "up" | "down" | "left" | "right" }) => {
  const shape = { up: "M0 7h9L4.500 2z", down: "M0 2h9L4.500 7z", left: "M7 0v9L2 4.500z", right: "M2 0v9l5-4.500z" }[dir];
  return <svg width="9" height="9" viewBox="0 0 9 9" aria-hidden="true"><path d={shape} fill="currentColor" /></svg>;
};

const Pager = styled.div`
  height: 26px; flex: none; margin-right: 1px; padding-left: 1px; background: ${bar};
  display: flex; align-items: center; font: 11px/13px ${ui};
  & > ${Tool} { margin: 0; }
`;
const Zoom = styled.output`width: 36px; text-align: center; margin: 0 15px 0 12px;`;
const Round = styled.button`
  width: 16px; height: 16px; border-radius: 8px; border: 1px solid #5f7fb0; background: #dbe7f6; flex: none;
  display: flex; align-items: center; justify-content: center;
`;
const Slider = styled.input`
  appearance: none; width: 96px; height: 16px; background: linear-gradient(#6f9bd4, #6f9bd4) center / 100% 1px no-repeat; outline: 0;
  &::-webkit-slider-thumb {
    appearance: none; width: 9px; height: 13px; border: 1px solid #4f6fa5; border-radius: 1px 1px 4px 4px;
    background: linear-gradient(90deg, #dce9f8 3px, #6f8fc0 3px 4px, #dce9f8 4px);
  }
`;
const RefreshRow = styled.div`
  height: 25px; flex: none; display: flex; align-items: center; padding-left: 150px; gap: 8px;
  & > label { margin-left: 6px; }
`;
const FlatButton = styled.button<{ $dim?: boolean }>`
  width: 96px; height: 20px; background: ${bar}; color: ${p => (p.$dim ? "#8d8b80" : "#000")};
`;
const CheckLabel = styled.label`display: flex; align-items: center; gap: 6px; height: 16px; color: #1f3f8f;`;

const SidePanel = styled.aside`
  flex: 668 1 0; min-width: 0; margin-left: 3px; background: ${bar}; display: flex; flex-direction: column;
`;
const SideTitle = styled.header`
  height: 20px; flex: none; display: flex; align-items: center; gap: 2px; padding: 0 4px 0 5px; margin: 0 1px;
  background: ${face}; border: 1px solid #aca899; color: #404040;
`;
const SideName = styled.h2`margin: 0; flex: 1; font: inherit;`;
const PinButton = styled.button`width: 23px; height: 16px; display: flex; align-items: center; justify-content: center;`;
const TreeBox = styled.ul`
  flex: 1; min-height: 0; margin: 0 3px 0 4px; padding: 0 0 0 1px; list-style: none; background: ${face};
  border: 2px solid; border-color: #404040 #fff #fff #404040; border-right-width: 1px; border-bottom-width: 1px; overflow: hidden;
`;
const TreeRow = styled.li`display: flex; align-items: center; height: 16px; white-space: nowrap;`;
const dotsV = "repeating-linear-gradient(#808080 0 1px, transparent 1px 2px)";
const dotsH = "repeating-linear-gradient(90deg, #808080 0 1px, transparent 1px 2px)";
const Guide = styled.span<{ $v?: "full" | "half" | "low" | "none"; $h?: boolean }>`
  width: 19px; height: 16px; flex: none; display: flex; align-items: center; justify-content: center;
  background-image: ${dotsV}, ${dotsH};
  background-repeat: no-repeat;
  background-position: 9px ${p => (p.$v === "low" ? 8 : 0)}px, 9px 8px;
  background-size: ${p => (p.$v === "none" ? "0 0" : p.$v === "full" ? "1px 16px" : "1px 8px")}, ${p => (p.$h ? "10px 1px" : "0 0")};
`;
const Expander = styled.button<{ $open?: boolean }>`
  width: 9px; height: 9px; border: 1px solid #808080;
  background:
    linear-gradient(#000, #000) center / 5px 1px no-repeat,
    linear-gradient(#000, #000) center / 1px ${p => (p.$open ? 1 : 5)}px no-repeat,
    ${face};
`;
const IconCell = styled.span`width: 19px; display: flex; justify-content: center; flex: none;`;
const NodeText = styled.span<{ $on?: boolean }>`
  padding: 1px 2px; margin-left: 1px; line-height: 14px;
  ${p => p.$on && css`background: ${navy}; color: #fff;`}
`;
const Options = styled.div`height: 49px; flex: none; margin: 0 3px 3px 4px; background: ${face}; padding: 1px 2px;`;
const SideTabs = styled.div`height: 25px; flex: none; background: ${cream}; border-top: 1px solid #fff; display: flex;`;
const SideTab = styled.button<{ $on?: boolean }>`
  height: 21px; display: flex; align-items: center; gap: 7px; padding: 0 6px 0 8px; color: #808080;
  & + & { padding-left: 4px; }
  && {
    ${p => p.$on && css`background: ${face}; color: #000; border: solid #000; border-width: 0 1px 1px 0; padding: 0 5px 0 3px;`}
  }
`;

const StatusBar = styled.footer`
  height: 26px; flex: none; background: ${bar}; display: flex; align-items: center; font: 11px/13px ${ui};
`;
const StatusItem = styled.button`display: flex; align-items: center; gap: 4px; padding: 0 4px; height: 22px;`;

/* ---------- exception dialog ---------- */

const Dialog = styled.section`
  position: absolute; left: 338px; top: 471px; width: 444px; background: ${face}; padding: 2px 2px 11px;
  border: 1px solid; border-color: ${face} #404040 #404040 ${face};
  box-shadow: inset 1px 1px #fff, inset -1px -1px #808080;
`;
const DialogTitle = styled.header`
  height: 18px; display: flex; align-items: center; padding: 0 2px; color: #fff; font: bold 11px/16px ${ui};
  background: linear-gradient(90deg, #0a246a, #000080 60%);
`;
const Message = styled.div`display: grid; grid-template-columns: 33px 1fr; gap: 18px; padding: 9px 10px 0 16px; height: 107px;`;
const ErrorBadge = styled.svg`margin-top: 7px;`;
const MessageText = styled.p`margin: 0; white-space: pre;`;
const DialogButtons = styled.div`display: flex; gap: 5px; padding: 0 8px; margin-bottom: 8px;`;
const DetailsFace = styled.span`display: flex; align-items: center; width: 100%; padding-left: 9px; gap: 15px;`;
const DetailsBox = styled.div`
  margin: 0 8px; height: 153px; display: grid; grid-template: minmax(0, 1fr) 16px / minmax(0, 1fr) 16px;
  border: 1px solid; border-color: #808080 #fff #fff #808080; box-shadow: inset 1px 1px #404040; padding: 1px;
`;
const DetailsText = styled.textarea`
  border: 0; outline: 0; resize: none; overflow: hidden; white-space: pre; background: transparent; padding: 2px 1px 0; width: 100%; height: 100%;
`;
const Track = styled.div<{ $row?: boolean }>`
  display: flex; flex-direction: ${p => (p.$row ? "row" : "column")}; justify-content: space-between;
  background: repeating-conic-gradient(#fff 0 25%, ${face} 0 50%) 0 0 / 2px 2px;
`;
const TrackPart = styled.div<{ $row?: boolean }>`display: flex; flex-direction: ${p => (p.$row ? "row" : "column")};`;
const TrackButton = styled.button`${raised} width: 16px; height: 16px; display: flex; align-items: center; justify-content: center; flex: none;`;
const TrackThumb = styled.div<{ $w: number; $h: number }>`${raised} width: ${p => p.$w}px; height: ${p => p.$h}px;`;

/* ---------- data ---------- */

type Node = { level: number; icon: string; text: string; open?: boolean; first?: boolean; last?: boolean; leaf?: boolean; on?: boolean };
const nodes: Node[] = [
  { level: 0, icon: "table", text: "Data Sources", open: true, first: true },
  { level: 1, icon: "db", text: "DbConnection [SQL Connection]", open: true, last: true },
  { level: 2, icon: "table", text: "[dbo].ReportHeaderInfo2", open: true, last: true, on: true },
  { level: 3, icon: "abc", text: "RootPointName [Название корневой точки]", leaf: true },
  { level: 3, icon: "abc", text: "MainParameterName [Имя основного параметра]", leaf: true },
  { level: 3, icon: "parameters", text: "Parameters", last: true },
  { level: 0, icon: "business", text: "Business Objects", leaf: true },
  { level: 0, icon: "variable", text: "Variables" },
  { level: 0, icon: "sysVar", text: "System Variables" },
  { level: 0, icon: "fx", text: "Functions", last: true },
];

const trace = `************** Exception Text **************
System.Data.SqlClient.SqlException (0x80131904): Procedure or function 'ReportHeaderInfo2' expects parameter
   at System.Data.SqlClient.SqlConnection.OnError(SqlException exception, Boolean breakConnection)
   at System.Data.SqlClient.TdsParser.ThrowExceptionAndWarning()
   at System.Data.SqlClient.TdsParser.Run(RunBehavior runBehavior, SqlCommand cmdHandler)
   at System.Data.SqlClient.SqlDataReader.ConsumeMetaData()
   at System.Data.SqlClient.SqlDataReader.get_MetaData()
   at System.Data.SqlClient.SqlCommand.FinishExecuteReader(SqlDataReader ds, RunBehavior runBehavior)
   at System.Data.SqlClient.SqlCommand.RunExecuteReaderTds(CommandBehavior cmdBehavior)
   at System.Data.SqlClient.SqlCommand.RunExecuteReader(CommandBehavior cmdBehavior)`;

const message = `Unhandled exception has occurred in your application. If you click
Continue, the application will ignore this error and attempt to continue. If
you click Quit, the application will close immediately.

Procedure or function 'ReportHeaderInfo2' expects parameter
'@SecurityToken', which was not supplied.`;

const CloseMark = () => (
  <svg width="8" height="7" viewBox="0 0 8 7" aria-hidden="true"><path d="M0 0l7 7M1 0l7 7M7 0L0 7M8 0L1 7" stroke="#000" /></svg>
);

const TopToolbars = () => (
  <>
    <ToolbarRow>
      <Toolbar>
        <Grip />
        <Tools names={["newDoc", "open", "save", "preview"]} /><Sep />
        <Tools names={["newPage", "newForm", "delPage", "pageSetup"]} /><Sep />
        <Tools names={["undo", "redo"]} /><Sep />
        <Tools names={["cut", "copy", "paste", "cross"]} /><Sep />
        <Tools names={["select"]} /><Sep />
        {["grid", "snap", "form"].map(n => <Tool key={n} $on aria-label={n}><Icon name={n} /></Tool>)}
        <Tools names={["order", "layers"]} />
        <DropArrow />
        <Tool $on aria-label="ruler"><Icon name="ruler" /></Tool><Sep />
        <Space $w={2} />
        <Combo $w={70}>
          <ComboSelect aria-label="Zoom"><option>91%</option></ComboSelect>
          <DropArrow w={14} />
        </Combo>
        <TextTool $pad={19}>Close</TextTool>
        <DropArrow w={17} low />
      </Toolbar>
      <Toolbar>
        <Grip />
        <Tools names={["bAll"]} />
        <Tool $on aria-label="bNone"><Icon name="bNone" /></Tool><Sep />
        <Tools names={["bTop", "bLeft", "bBottom", "bRight"]} /><Sep />
        <Tools names={["bShadow"]} /><Sep />
        <Tools names={["bucket"]} /><DropArrow />
        <Tools names={["brush"]} /><DropArrow />
        <LineSample aria-label="Border style" /><DropArrow />
        <DropArrow w={18} low />
      </Toolbar>
      <Toolbar>
        <Grip />
        <Tools names={["aa"]} />
        <StyleBox /><DropArrow />
        <DropArrow w={18} low />
      </Toolbar>
    </ToolbarRow>
    <ToolbarRow>
      <Toolbar>
        <Grip />
        <Space $w={2} />
        <Combo $w={130}><ComboSelect aria-label="Font" disabled /><DropArrow w={14} dim /></Combo>
        <Space $w={5} />
        <Combo $w={50}><ComboSelect aria-label="Font size" disabled /><DropArrow w={14} dim /></Combo>
        <Space $w={2} /><Sep />
        {["B", "I", "U"].map(k => <Tool key={k} aria-label={k}><FontGlyph $kind={k}>{k}</FontGlyph></Tool>)}<Sep />
        <Tools names={["alignL", "alignC", "alignR", "alignJ"]} /><Sep />
        <Tools names={["vTop", "vMid", "vBot"]} /><Sep />
        <Tools names={["rotate"]} /><DropArrow w={13} dim /><Sep />
        <Tools names={["fontColor"]} /><DropArrow w={13} dim />
        <Tools names={["highlight"]} />
        <DropArrow w={16} low />
      </Toolbar>
      <Toolbar>
        <Grip />
        <Tools names={["toGrid"]} /><Sep />
        <Tools names={["objL", "objC", "objR"]} /><Sep />
        <Tools names={["objT", "objM", "objB"]} /><Sep />
        <Tools names={["size1", "size2", "size3"]} /><Sep />
        <Tools names={["spaceH", "spaceV"]} /><Sep />
        <Tools names={["centerH", "centerV"]} /><Sep />
        <Tools names={["front", "back"]} /><Sep />
        <Tools names={["forward", "backward"]} /><Sep />
        <Tools names={["lock", "link"]} />
        <DropArrow w={17} low />
      </Toolbar>
    </ToolbarRow>
  </>
);

const BoxTools = ({ names, arrows }: { names: string[]; arrows?: boolean }) => (
  <>
    {names.map(n => (
      <React.Fragment key={n}>
        <BoxTool $on={n === "pointer"} aria-label={n}><Icon name={n} /></BoxTool>
        {arrows && <BoxArrow aria-label={`${n} list`}><Caret dir="right" /></BoxArrow>}
      </React.Fragment>
    ))}
  </>
);

const DocumentArea = () => (
  <DocPanel>
    <DocTabs>
      <DocTab><Icon name="pageLines" />Page1</DocTab>
      <DocTab $on><Icon name="preview" />Preview</DocTab>
      <DocTab><Icon name="html" />HTML Preview</DocTab>
      <TabEnd />
    </DocTabs>
    <Toolbar $height={27}>
      <Grip />
      <TextTool $pad={4}><Icon name="print" />Print</TextTool>
      <Space $w={5} />
      <TextTool $pad={4}><Icon name="open" />Open</TextTool>
      <Space $w={5} />
      <TextTool $pad={4}><Icon name="save" />Save</TextTool>
      <DropArrow w={18} />
      <Tools names={["mail"]} /><DropArrow />
      <Sep />
      <Tools names={["bookmarks"]} />
      <Tool $on aria-label="params"><Icon name="params" /></Tool>
      <Tools names={["thumbs"]} /><Sep />
      <Tools names={["find"]} /><Sep />
      <Tools names={["fullScreen", "onePage", "pageWidth"]} />
      <Space />
      <Help aria-label="Help">?</Help>
    </Toolbar>
    <ParamForm onSubmit={e => e.preventDefault()}>
      <ParamRow>
        <ParamLabel htmlFor="token">SecurityToken</ParamLabel>
        <ParamInput id="token" defaultValue="0" />
        <Highlight><Check type="checkbox" defaultChecked aria-label="Null value" /></Highlight>
      </ParamRow>
      <ButtonRow>
        <Push type="button" $w={75}>Reset</Push>
        <Push type="submit" $w={75} $default>Submit</Push>
      </ButtonRow>
    </ParamForm>
    <Viewer>
      <Canvas>
        <Sheet>
          <Watermark width="628" height="603" viewBox="0 0 628 603" aria-hidden="true">
            <path d="M596 246l40 40H556zM346 582h42l16 19 17-19h32l-18 21h-69z" fill="#dcdcdc" />
          </Watermark>
          <Heading>Максимумы по суткам :</Heading>
          <Facts>
            <FactName>Объект:</FactName><FactValue>SomeName 1</FactValue>
            <FactName>Отчетный период (ОП):</FactName><FactValue />
            <FactName>Учетный параметр:</FactName><FactValue />
          </Facts>
        </Sheet>
      </Canvas>
      <VBar>
        <BarEnd aria-label="Scroll up"><BigCaret dir="up" /></BarEnd>
        <VThumb />
        <Space />
        <BarEnd aria-label="Scroll down"><BigCaret dir="down" /></BarEnd>
      </VBar>
      <HBar>
        <BarEnd aria-label="Scroll left"><BigCaret dir="left" /></BarEnd>
        <HThumb />
        <Space />
        <BarEnd aria-label="Scroll right"><BigCaret dir="right" /></BarEnd>
      </HBar>
    </Viewer>
    <Pager>
      <Tool aria-label="First page"><Icon name="first" /></Tool>
      <Space $w={3} />
      <Tool aria-label="Previous page"><Icon name="prev" /></Tool>
      <TextTool $pad={7}>Page 1 of 1</TextTool>
      <Space $w={3} />
      <Tool aria-label="Next page"><Icon name="next" /></Tool>
      <Tool aria-label="Last page"><Icon name="last" /></Tool>
      <Space />
      <Tool $on aria-label="Single page"><Icon name="single" /></Tool>
      <Tool aria-label="Continuous"><Icon name="rows" /></Tool>
      <Tool aria-label="Multiple pages"><Icon name="multi" /></Tool>
      <Zoom>97%</Zoom>
      <Round aria-label="Zoom out"><svg width="8" height="8"><path d="M0 4h8" stroke="#33475f" strokeWidth="2" /></svg></Round>
      <Slider type="range" aria-label="Zoom" min={0} max={100} defaultValue={48} />
      <Round aria-label="Zoom in"><svg width="8" height="8"><path d="M0 4h8M4 0v8" stroke="#33475f" strokeWidth="2" /></svg></Round>
      <Space $w={13} />
    </Pager>
    <RefreshRow>
      <FlatButton $dim>Stop</FlatButton>
      <FlatButton>Refresh</FlatButton>
      <CheckLabel><Check $soft type="checkbox" defaultChecked />Auto Refresh</CheckLabel>
    </RefreshRow>
  </DocPanel>
);

const DictionaryPanel = () => (
  <SidePanel>
    <SideTitle>
      <SideName>Dictionary</SideName>
      <PinButton aria-label="Pin"><svg width="8" height="10" viewBox="0 0 8 10"><path d="M1 .500h5M2.500 0v5M5.500 0v5M4.500 0v5M0 5.500h8M4 6v4" stroke="#000" /></svg></PinButton>
      <CloseMark />
    </SideTitle>
    <Toolbar $height={27} $top={3}>
      <TextTool $pad={9}>Actions</TextTool>
      <DropArrow w={9} />
      <Tools names={["newItem"]} /><DropArrow w={12} />
      <Tools names={["edit", "remove"]} /><Sep />
      <Tools names={["up", "down", "sort"]} /><DropArrow />
    </Toolbar>
    <TreeBox>
      {nodes.map(n => (
        <TreeRow key={n.text}>
          {Array.from({ length: n.level }, (_, i) => <Guide key={i} $v={i === 0 ? "full" : "none"} />)}
          <Guide $v={n.first ? "low" : n.last ? "half" : "full"} $h>
            {!n.leaf && <Expander $open={n.open} aria-label={n.text} />}
          </Guide>
          <IconCell><Icon name={n.icon} /></IconCell>
          <NodeText $on={n.on}>{n.text}</NodeText>
        </TreeRow>
      ))}
    </TreeBox>
    <Options>
      <CheckLabel><Check $soft type="checkbox" defaultChecked />Create Field on Double Click</CheckLabel>
      <CheckLabel><Check $soft type="checkbox" defaultChecked />Create Label</CheckLabel>
      <CheckLabel><Check $soft type="checkbox" />Use Aliases</CheckLabel>
    </Options>
    <SideTabs>
      <SideTab><Icon name="properties" />Properties</SideTab>
      <SideTab $on><Icon name="dictionary" />Dictionary</SideTab>
      <SideTab><Icon name="tree" />Report Tree</SideTab>
      <TabEnd />
    </SideTabs>
  </SidePanel>
);

const ExceptionDialog = () => (
  <Dialog role="dialog" aria-label="ReportWithError.mrt - Designer">
    <DialogTitle>
      <TitleText as="h2">ReportWithError.mrt - Designer</TitleText>
      <CaptionButton aria-label="Close"><CloseMark /></CaptionButton>
    </DialogTitle>
    <Message>
      <ErrorBadge width="33" height="33" viewBox="0 0 33 33" aria-hidden="true">
        <circle cx="16.500" cy="16.500" r="15.500" fill="#f2f2f2" stroke="#8c8c8c" />
        <circle cx="16.500" cy="16.500" r="14" fill="url(#alarm)" />
        <path d="M11 11l11 11M22 11L11 22" stroke="#fff" strokeWidth="4.500" strokeLinecap="round" />
      </ErrorBadge>
      <MessageText>{message}</MessageText>
    </Message>
    <DialogButtons>
      <Push $w={100} $default><DetailsFace><svg width="7" height="4"><path d="M0 4h7L3.500 0z" /></svg>Details</DetailsFace></Push>
      <Space />
      <Push $w={100}>Continue</Push>
      <Push $w={100}>Quit</Push>
    </DialogButtons>
    <DetailsBox>
      <DetailsText readOnly aria-label="Exception details" defaultValue={trace} />
      <Track>
        <TrackPart>
          <TrackButton aria-label="Scroll up"><svg width="7" height="4"><path d="M0 4h7L3.500 0z" /></svg></TrackButton>
          <TrackThumb $w={16} $h={10} />
        </TrackPart>
        <TrackButton aria-label="Scroll down"><svg width="7" height="4"><path d="M0 0h7L3.500 4z" /></svg></TrackButton>
      </Track>
      <Track $row>
        <TrackPart $row>
          <TrackButton aria-label="Scroll left"><svg width="4" height="7"><path d="M4 0v7L0 3.500z" /></svg></TrackButton>
          <TrackThumb $w={153} $h={16} />
        </TrackPart>
        <TrackButton aria-label="Scroll right"><svg width="4" height="7"><path d="M0 0v7l4-3.500z" /></svg></TrackButton>
      </Track>
    </DetailsBox>
  </Dialog>
);

export default function App() {
  return (
    <Screen>
      <Global />
      <svg width="0" height="0" aria-hidden="true">
        <defs>
          <linearGradient id="paper" x1="0" y1="0" x2="1" y2="1">
            <stop offset="0.200" stopColor="#fff" />
            <stop offset="1" stopColor="#a9c0ea" />
          </linearGradient>
          <linearGradient id="alarm" x1="0" y1="0" x2="0" y2="1">
            <stop offset="0" stopColor="#e0605c" />
            <stop offset="0.500" stopColor="#c8201c" />
            <stop offset="1" stopColor="#b01512" />
          </linearGradient>
        </defs>
      </svg>
      <Window>
        <TitleBar>
          <Icon name="logo" />
          <TitleText>ReportWithError.mrt - Designer</TitleText>
          <CaptionButtons>
            <CaptionButton aria-label="Minimize"><svg width="8" height="8"><path d="M0 6h6v2H0z" /></svg></CaptionButton>
            <CaptionButton aria-label="Maximize"><svg width="9" height="9"><path d="M.500 1.500h8v7h-8zM0 .500h9" fill="none" stroke="#000" /></svg></CaptionButton>
            <CaptionButton $gap aria-label="Close"><CloseMark /></CaptionButton>
          </CaptionButtons>
        </TitleBar>
        <MenuBar>
          {["File", "Edit", "View", "Tools", "Help"].map(m => <MenuItem key={m}>{m}</MenuItem>)}
        </MenuBar>
        <TopToolbars />
        <Body>
          <Toolbox>
            <TopGrip />
            <BoxTools names={["pointer", "hand", "text", "painter"]} /><BoxSep />
            <BoxTools names={["bands", "crossTab", "components", "shapes"]} arrows /><BoxSep />
            <BoxTools names={["bandTitle", "bandSummary", "pageHeader", "pageFooter", "groupHeader", "groupFooter", "dataBand", "textBox", "image"]} /><BoxSep />
            <BoxTools names={["toolbox"]} />
          </Toolbox>
          <DocumentArea />
          <DictionaryPanel />
        </Body>
        <StatusBar>
          <Grip />
          <StatusItem>Centimeters</StatusItem>
          <Arrow $w={17} aria-label="Units"><Caret dir="up" /></Arrow><Sep />
          <StatusItem><Icon name="play" />Report Checker</StatusItem><Space $w={3} /><Sep />
          <StatusItem>Page1</StatusItem><Space $w={3} /><Sep />
        </StatusBar>
      </Window>
      <Edge />
      <ExceptionDialog />
    </Screen>
  );
}
